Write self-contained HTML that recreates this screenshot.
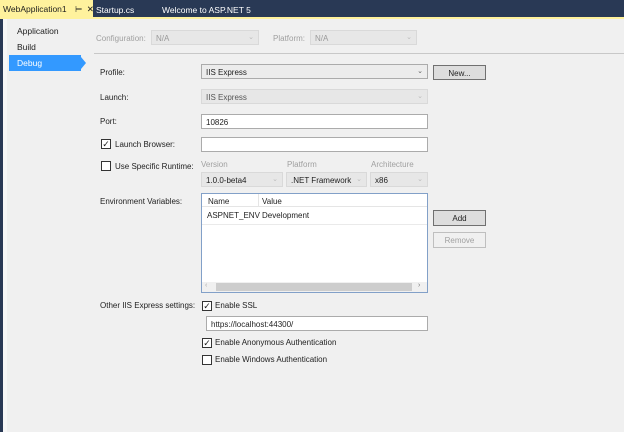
<!DOCTYPE html>
<html><head><style>
*{box-sizing:border-box;margin:0;padding:0}
body{width:624px;height:432px;overflow:hidden;background:#f0f0f0;font-family:"Liberation Sans",sans-serif;font-size:8px;color:#1e1e1e;position:relative}
.a{position:absolute;white-space:nowrap}
.tb{position:absolute;left:0;top:0;width:624px;height:17px;background:#293955}
.line{position:absolute;left:0;top:17px;width:624px;height:2px;background:#fff29d}
.cb{position:absolute;height:15px;border:1px solid #ababab;background:#fff;padding:3px 4px;font-size:8px}
.cb.g{background:#e7e7e7;border-color:#d9d9d9}
.cb .ar{position:absolute;right:4px;top:2px;font-size:7px;color:#606060}
.cb.d{color:#555}
.cb.d .ar{color:#bbb}
.btn{position:absolute;border:1px solid #707070;background:#dddddd;text-align:center;font-size:8px;padding-top:3px}
.chk{position:absolute;width:10px;height:10px;border:1px solid #333;background:#fff;font-size:9px;line-height:8px;text-align:center}
.dis{color:#a0a0a0}
</style></head><body>
<div class="tb"></div>
<div class="a" style="left:0;top:0;width:93px;height:19px;background:#fff29d"></div>
<div class="a" style="left:3px;top:4px;font-size:8.5px;color:#1e1e1e">WebApplication1 <span style="margin-left:6px">⊨</span> <span style="margin-left:2px">✕</span></div>
<div class="a" style="left:96px;top:5px;font-size:8.5px;color:#fff">Startup.cs</div>
<div class="a" style="left:162px;top:5px;font-size:8.5px;color:#fff">Welcome to ASP.NET 5</div>
<div class="line"></div>
<div class="a" style="left:0;top:19px;width:3px;height:413px;background:#293955"></div>
<div class="a" style="left:3px;top:19px;width:4px;height:413px;background:#f7f7f7"></div>
<div class="a" style="left:17px;top:26px;font-size:8.5px">Application</div>
<div class="a" style="left:17px;top:42px;font-size:8.5px">Build</div>
<div class="a" style="left:9px;top:55px;width:72px;height:16px;background:#3399ff"></div>
<div class="a" style="left:81px;top:57px;width:0;height:0;border-top:6px solid transparent;border-bottom:6px solid transparent;border-left:5px solid #3399ff"></div>
<div class="a" style="left:17px;top:58px;font-size:8.5px;color:#fff">Debug</div>

<div class="a dis" style="left:96px;top:34px">Configuration:</div>
<div class="cb g d" style="left:151px;top:30px;width:108px;color:#999"><span>N/A</span><span class="ar">⌄</span></div>
<div class="a dis" style="left:273px;top:34px">Platform:</div>
<div class="cb g d" style="left:310px;top:30px;width:107px;color:#999"><span>N/A</span><span class="ar">⌄</span></div>
<div class="a" style="left:94px;top:53px;width:530px;height:1px;background:#c8c8c8"></div>

<div class="a" style="left:100px;top:68px">Profile:</div>
<div class="cb" style="left:201px;top:64px;width:227px;background:#ececec">IIS Express<span class="ar">⌄</span></div>
<div class="btn" style="left:433px;top:65px;width:53px;height:15px">New...</div>
<div class="a" style="left:100px;top:93px">Launch:</div>
<div class="cb g d" style="left:201px;top:89px;width:227px">IIS Express<span class="ar">⌄</span></div>
<div class="a" style="left:100px;top:117px">Port:</div>
<div class="cb" style="left:201px;top:114px;width:227px">10826</div>
<div class="chk" style="left:101px;top:139px">✓</div>
<div class="a" style="left:115px;top:140px">Launch Browser:</div>
<div class="cb" style="left:201px;top:137px;width:227px"></div>
<div class="chk" style="left:101px;top:161px"></div>
<div class="a" style="left:115px;top:162px">Use Specific Runtime:</div>
<div class="a dis" style="left:201px;top:160px">Version</div>
<div class="a dis" style="left:287px;top:160px">Platform</div>
<div class="a dis" style="left:371px;top:160px">Architecture</div>
<div class="cb g" style="left:201px;top:172px;width:82px">1.0.0-beta4<span class="ar" style="color:#bbb">⌄</span></div>
<div class="cb g" style="left:286px;top:172px;width:81px">.NET Framework<span class="ar" style="color:#bbb">⌄</span></div>
<div class="cb g" style="left:370px;top:172px;width:58px">x86<span class="ar" style="color:#bbb">⌄</span></div>

<div class="a" style="left:100px;top:197px">Environment Variables:</div>
<div class="a" style="left:201px;top:193px;width:227px;height:100px;border:1px solid #82a0c8;background:#fff"></div>
<div class="a" style="left:202px;top:194px;width:225px;height:13px;border-bottom:1px solid #e5e5e5"></div>
<div class="a" style="left:258px;top:194px;width:1px;height:13px;background:#e5e5e5"></div>
<div class="a" style="left:208px;top:197px">Name</div>
<div class="a" style="left:262px;top:197px">Value</div>
<div class="a" style="left:207px;top:211px">ASPNET_ENV</div>
<div class="a" style="left:262px;top:211px">Development</div>
<div class="a" style="left:202px;top:224px;width:225px;height:1px;background:#eaeaea"></div>
<div class="a" style="left:202px;top:282px;width:225px;height:10px;background:#f0f0f0"></div>
<div class="a" style="left:216px;top:283px;width:196px;height:8px;background:#cdcdcd"></div>
<div class="a" style="left:205px;top:282px;font-size:7px;color:#aaa">‹</div>
<div class="a" style="left:418px;top:282px;font-size:7px;color:#777">›</div>
<div class="btn" style="left:433px;top:210px;width:53px;height:16px">Add</div>
<div class="btn" style="left:433px;top:232px;width:53px;height:16px;border-color:#bfbfbf;background:#f0f0f0;color:#a0a0a0">Remove</div>

<div class="a" style="left:100px;top:301px">Other IIS Express settings:</div>
<div class="chk" style="left:202px;top:301px">✓</div>
<div class="a" style="left:215px;top:301px">Enable SSL</div>
<div class="cb" style="left:206px;top:316px;width:222px">https://localhost:44300/</div>
<div class="chk" style="left:202px;top:338px">✓</div>
<div class="a" style="left:215px;top:338px">Enable Anonymous Authentication</div>
<div class="chk" style="left:202px;top:355px"></div>
<div class="a" style="left:215px;top:355px">Enable Windows Authentication</div>
</body></html>
